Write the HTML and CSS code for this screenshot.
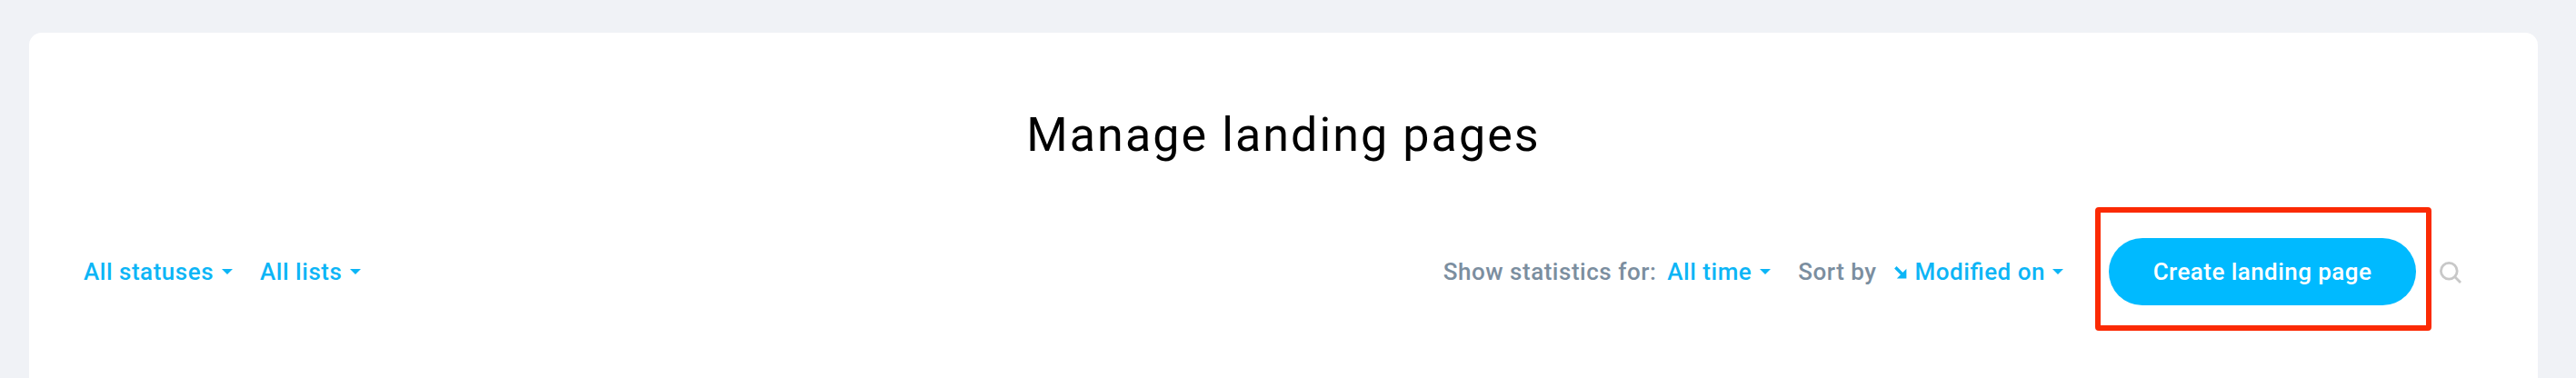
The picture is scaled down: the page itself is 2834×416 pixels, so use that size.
FILE: index.html
```html
<!DOCTYPE html>
<html lang="en">
<head>
<meta charset="utf-8">
<title>Manage landing pages</title>
<link rel="stylesheet" href="styles.css">
</head>
<body>
<main class="card">
  <h1 class="title">Manage landing pages</h1>
  <div class="toolbar">
    <div class="filters">
      <a class="dropdown statuses"><span>All statuses</span><svg class="caret" viewBox="0 0 12 6"><path d="M0 0h12L6 6z"/></svg></a>
      <a class="dropdown"><span>All lists</span><svg class="caret" viewBox="0 0 12 6"><path d="M0 0h12L6 6z"/></svg></a>
    </div>
    <div class="actions">
      <span class="label">Show statistics for:</span>
      <a class="dropdown period"><span>All time</span><svg class="caret" viewBox="0 0 12 6"><path d="M0 0h12L6 6z"/></svg></a>
      <span class="label sort-label">Sort by</span>
      <a class="dropdown sort"><svg class="arrow" viewBox="0 0 14 14"><path d="M1.3 1.3L10 10" fill="none" stroke="currentColor" stroke-width="3.4"/><path d="M13.4 2.8V13.4H2.8z" fill="currentColor"/></svg><span>Modified on</span><svg class="caret" viewBox="0 0 12 6"><path d="M0 0h12L6 6z"/></svg></a>
      <div class="highlight"><button class="create">Create landing page</button></div>
      <svg class="search" viewBox="0 0 24 24"><circle cx="10.3" cy="10.3" r="8.9"/><path d="M16.8 16.8l6.2 6.2"/></svg>
    </div>
  </div>
</main>
</body>
</html>
```
FILE: styles.css
```css
* { box-sizing: border-box; }
body {
  margin: 0;
  height: 416px;
  padding: 36px 42px 0 32px;
  overflow: hidden;
  background: #f0f2f6;
  font-family: Roboto, "Liberation Sans", sans-serif;
}
.card {
  height: 380px;
  padding: 81px 84px 0 60px;
  border-radius: 14px 14px 0 0;
  background: #fff;
}
.title {
  margin: 0 -24px 0 0;
  text-align: center;
  font-size: 52px;
  font-weight: 400;
  line-height: 64px;
  letter-spacing: 2.08px;
  color: #000;
}
.toolbar {
  display: flex;
  align-items: center;
  justify-content: space-between;
  height: 136px;
  margin-top: 47px;
  font-size: 26px;
  font-weight: 500;
  line-height: 36px;
  letter-spacing: 0.52px;
  white-space: nowrap;
}
.filters, .actions, .dropdown { display: flex; align-items: center; }
.dropdown, .label { padding-top: 6px; }
.dropdown { color: #0cb5f6; font-feature-settings: "liga" 1; }
.statuses { margin-right: 30px; }
.caret {
  width: 12px;
  height: 6px;
  margin: 0 0 0 9px;
  fill: currentColor;
}
.label { color: #7b8e9f; }
.period { margin-left: 12px; }
.sort-label { margin-left: 30px; }
.sort { margin-left: 19px; }
.sort .caret { margin-left: 8px; }
.arrow { width: 14px; height: 14px; margin: 1px 9px 0 0; }
.highlight {
  width: 370px;
  height: 136px;
  margin-left: 35px;
  padding: 28px 9px 0;
  border: 6px solid #fb2a04;
  border-radius: 4px;
}
.create {
  display: block;
  width: 338px;
  height: 74px;
  padding: 0;
  border: 0;
  border-radius: 37px;
  background: #00baff;
  color: #fff;
  font: inherit;
  letter-spacing: 0.44px;
}
.search {
  width: 24px;
  height: 24px;
  margin: 8px 0 0 9px;
  fill: none;
  stroke: #c8c8c8;
  stroke-width: 2.8;
}
```
